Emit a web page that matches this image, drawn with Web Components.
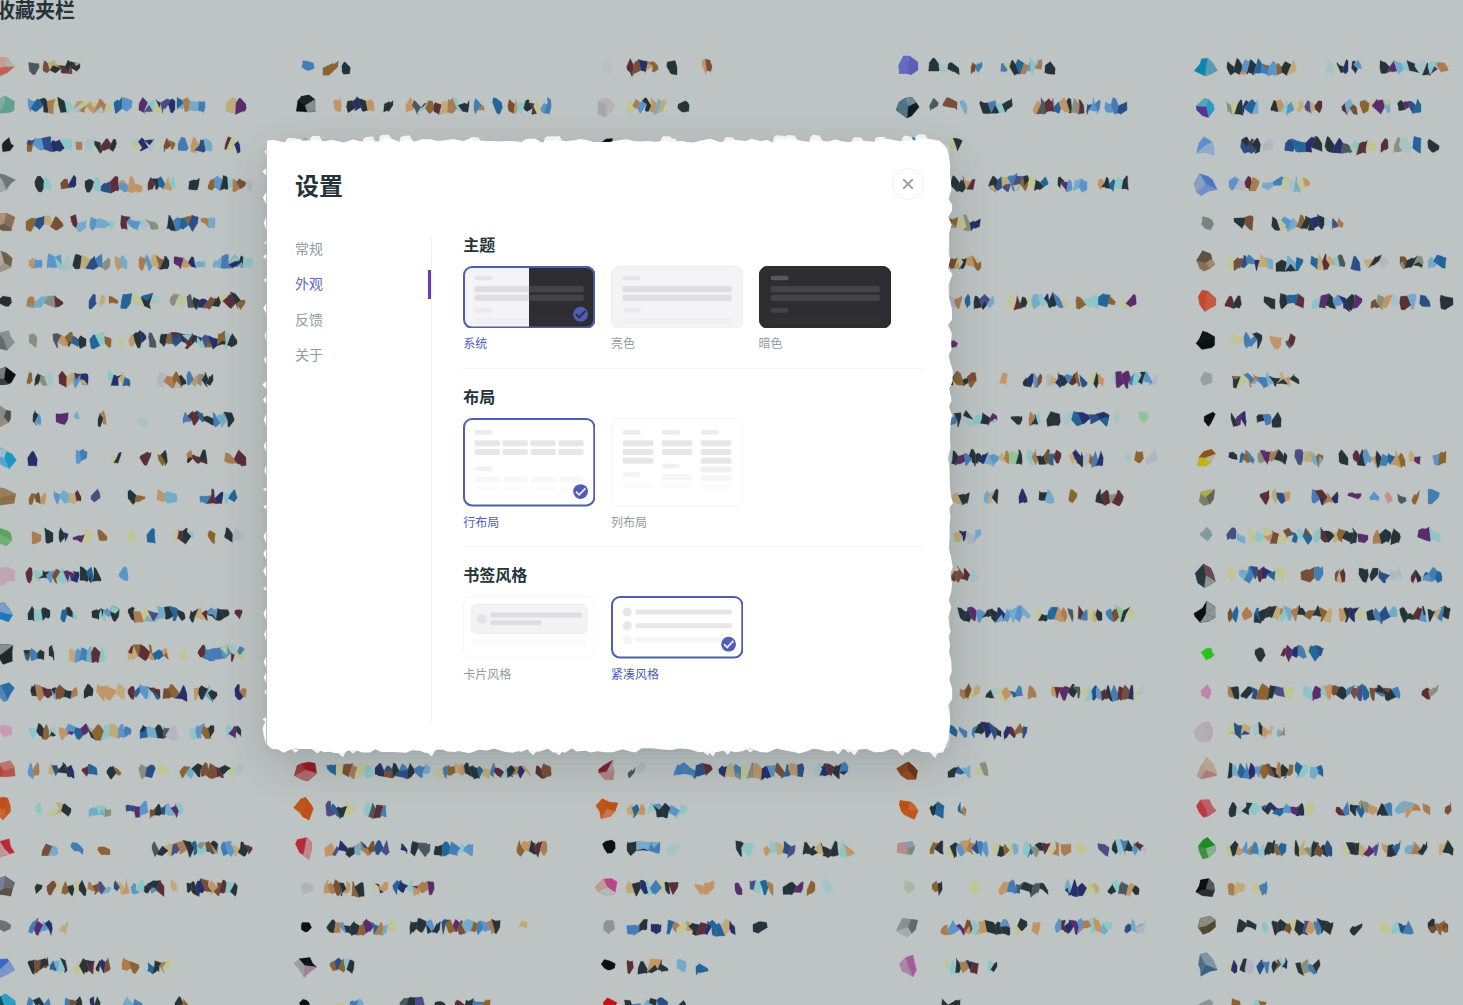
<!DOCTYPE html>
<html lang="zh-CN">
<head>
<meta charset="utf-8">
<title>收藏夹栏</title>
<style>
html,body{margin:0;height:100%;overflow:hidden;background:#bec4c3}
body{font-family:"Noto Sans CJK SC","Noto Sans",sans-serif;color:#26343a}
</style>
</head>
<body>
<bookmark-page heading="收藏夹栏">
<settings-dialog heading="设置">
<settings-nav slot="nav">
<nav-item>常规</nav-item><nav-item active>外观</nav-item><nav-item>反馈</nav-item><nav-item>关于</nav-item>
</settings-nav>
<settings-section heading="主题">
<option-card kind="system" selected>系统</option-card><option-card kind="light">亮色</option-card><option-card kind="dark">暗色</option-card>
</settings-section>
<settings-section heading="布局">
<option-card kind="rows" selected>行布局</option-card><option-card kind="columns">列布局</option-card>
</settings-section>
<settings-section heading="书签风格">
<option-card kind="cards">卡片风格</option-card><option-card kind="compact" selected>紧凑风格</option-card>
</settings-section>
</settings-dialog>
</bookmark-page>
<script>
const seeded = s => () => { s = (s + 0x6D2B79F5) | 0; let t = Math.imul(s ^ s >>> 15, 1 | s); t = t + Math.imul(t ^ t >>> 7, 61 | t) ^ t; return ((t ^ t >>> 14) >>> 0) / 4294967296; };
const root = (el, html) => { el.attachShadow({mode:'open'}).innerHTML = html; };
const f = n => n.toFixed(1);

const INK = {d:'#26343a',n:'#25306b',b:'#23659a',s:'#447db3',l:'#5b94c8',c:'#74abc9',t:'#8cc6c6',p:'#a6c4c5',y:'#bfc594',a:'#c0aa78',o:'#c29567',m:'#aa7c51',w:'#8c6434',r:'#774f36',x:'#5b2e38',u:'#5a2c6c',e:'#4a4d86',g:'#8a8f7d',z:'#2a4f86',v:'#b3b6c2',k:'#0b1113',G:'#4b595e',q:'#8fc496',i:'#c69092'};

// Each row: row number | icon colours | runs of shards as start-end:inks
const COLUMNS = [
{x:4, rows:`0|#c4605a,#c9a08f,#a9b9ab|29-39:G 43-80:raxdd
1|#5fa090,#80ad9f|28-72:lbdmydt 73-111:pyomy 114-132:bl 139-175:utyen 177-205:bmcs 226-246:au
2|#1c2224|27-72:wlznt 76-82:m 85-116:pdxd 131-154:ynp 164-175:rw 178-188:s 191-212:ozc 225-240:xyn
3|#707674,#a5aaaa|35-51:dt 61-76:rn 85-100:dt 101-142:zxloo 148-175:xdbot 189-199:d 208-233:wldt 233-252:mrv
4|#6b594c,#b0917d,#8c7055|26-63:wzar 71-86:xc 90-115:lct 121-158:xlpg 167-198:dsbwz 201-215:mc
5|#6d6250,#a0978a,#b3aa98|29-42:ol 47-71:ltp 73-110:dazsg 115-127:oc 139-169:mlawd 174-205:uonc 213-252:csndt
6|#2a2f2d|27-63:mcgx 89-96:z 100-105:a 109-118:w 121-160:bydp 170-186:gy 187-245:Gdnrdyxdw
7|#8a9090,#666b6b|29-37:g 53-86:Gowbd 90-111:btw 119-124:y 129-146:odn 149-156:G 160-237:dwznxdtenwtd
8|#0b1113,#3b4142,#777d7c|27-32:w 35-53:dgp 59-88:xaln 108-130:tnab 157-186:vmwd 187-213:sogdd
9|#858a87,#4a4d4c,#958f7b|33-41:dl 56-68:u 74-79:c 98-106:dm 138-149:p 183-234:sxbdscd
10|#1c96c4,#5ca6cc,#9fc0c6|28-37:n 76-87:ls 111-121:yd 140-151:x 158-167:wd 187-207:mxd 225-246:mx
11|#8c7045,#98805d|29-46:wro 54-81:lcax 91-100:e 128-145:dw 157-177:oc 200-223:sxn 224-237:tb
12|#5aa55e,#72ae76|32-41:m 45-53:d 59-68:dn 73-92:uy 98-107:w 128-136:y 147-155:b 173-194:yxdt 208-215:w 225-243:dv
13|#bfa4b1,#bda8b1|26-32:x 34-79:tdlrtun 80-101:dbd 119-128:l
14|#1b76bb,#7ba1c6|28-50:dtd 61-77:bdt 92-119:dtld 128-185:dmyecdbd 190-229:daxldd 235-242:x
15|#222829,#8d9190|24-44:Gsd 49-54:d 69-105:alscxt 128-168:awxwbo 180-186:y 198-244:xsslpy
16|#2a6ca5,#5089b4|31-77:dmxcrdm 84-93:d 97-125:ooa 128-160:xbltx 163-187:rwn 194-217:odcd 235-246:nm
17|#c79ab5|29-56:tdwp 59-131:olbudwtals 140-177:bcdGv 190-214:tlwd 226-241:tud
18|#b5544f,#b14543,#bd7770|28-39:lm 49-74:azddn 82-97:xb 107-121:dw 139-155:gz 158-169:y 180-243:wcdrrxdyp
19|#c0561c,#c96734,#bd5218|36-42:t 48-71:yad 89-111:ctg 126-148:zul 150-183:rdzcut
20|#b82a35,#bf9a9b|42-58:rc 71-83:s 98-110:w 152-218:Gdaemdbtrg 221-252:sladx
21|#5b5248,#77809c,#6a6b70|35-42:d 47-60:ry 62-86:wdyd 88-111:mrec 114-129:zao 131-164:ltddx 171-177:a 187-237:ddnrorxtd
22|#6b7074|29-52:suln 60-68:a
23|#3c69c0,#8196cc|28-48:drd 50-67:bctd 74-94:ydx 96-110:dnr 122-139:mw 148-171:bdmy
24|#2c9cc4,#164b58|27-50:tds 65-82:srd 90-100:nd 122-142:cs 175-188:dw`},
{x:305, rows:`0|#447db3|323-338:w 342-350:d
1|#0b1113,#1c2526,#888f8f|334-341:o 347-374:dndo 384-393:d 406-469:oGtwxamtd 474-484:sm 493-502:b 508-551:rotdxyls
2|#92b8ba|
18|#951b20,#b06b6b,#a33c3c|327-373:byrmyt 375-430:nrdzdsc 437-530:yswaoddbasxtdmno 536-551:xr
19|#c0561c,#bd5218|326-354:ebdy 364-386:tGxs
20|#b82a35,#c08a8c|325-389:oendcmrze 401-407:n 411-430:dG 434-473:dbstl 517-547:wodxm
21|#b0b5b4|324-350:omrdo 352-364:wd 372-388:ydo 393-434:bntomu
22|#0b1113|327-396:dmlddwubmcy 410-440:ddld 442-500:zwurcwslmd 519-527:a
23|#999e9e,#0b1113,#a4809d|330-354:wzwtd
24|#0b1113|333-345:y 350-363:sc 400-424:Gde 435-445:d 455-490:xdsw`},
{x:607, rows:`0|#b9c0c5|627-658:xrnow 667-677:d 702-712:or
1|#b4b1b3,#bbb4b5,#a5a8a9|627-666:ymldoca 678-689:d
2|#0b1113|700-714:t
18|#b08383,#7a2028,#b29595|628-635:G 637-645:v 674-712:sszx 719-804:nasygonlrboz 815-848:pnxds
19|#c0561c,#bd5218,#c77750|627-645:abo 648-687:tddlt
20|#0b1113|627-660:dcs 667-680:p 736-753:dt 764-795:otaze 803-838:ddadd 840-854:to
21|#b8458a,#b7bcb5,#c09c92|626-678:adntsydx 695-714:oo 735-742:u 750-773:etbm 783-803:du 807-815:w 822-833:p
22|#8f9493|627-647:sd 651-661:n 667-735:bmyodxnbban 753-767:d
23|#0b1113|627-633:x 638-668:dod 677-686:c 696-708:b
24|#c01515|625-668:dsccz 678-686:d`},
{x:908, rows:`0|#5a5fb8,#666bbd|929-939:d 939-947:p 948-959:d 971-982:rs 1001-1042:sydbmltm 1045-1055:d
1|#101f24,#51788a,#6d8d97|930-938:G 943-957:r 960-967:c 980-1012:dstd 1033-1084:oGxxbodgx 1087-1100:zls 1105-1127:lsz
2|#2080c0|950-962:yd
3||951-975:ddox 989-1048:dzasewydb 1058-1072:dul 1074-1087:cl 1098-1128:odbtd
4||948-980:wygn
5||948-981:rydow
6||948-962:vm 965-970:b 974-994:dec 1009-1068:yxdyctndsy 1076-1115:wttbw 1121-1136:yu
7||949-957:u
8||950-976:dwdr 1000-1007:o 1023-1042:dnlr 1046-1080:vandsxw 1080-1087:z 1090-1104:ydo 1111-1157:puustdlv
9||950-961:sd 963-997:ptdu 1011-1022:d 1029-1040:mdt 1047-1060:d 1063-1109:pbnzn 1114-1119:p 1139-1148:q
10||952-1022:dusddnclamqd 1027-1061:tmdrbx 1069-1103:andvwsn 1125-1131:p 1135-1143:w 1146-1157:v
11||950-969:ad 984-998:cad 1019-1027:n 1039-1054:dc 1069-1077:w 1096-1123:dxgx
12||954-981:anvc
13||950-978:rrxp
14||958-1030:ddulddnlclc 1036-1067:ydbbom 1068-1073:G 1078-1102:xsyad 1106-1134:srqdy
16||960-980:mrya 986-997:dp 998-1022:yobs 1028-1036:m 1051-1080:oxudG 1082-1143:ytzlxdsxrnyp
17||949-957:b 959-967:s 972-1001:sdnzd 1004-1027:nxwz
18|#85451f,#6b3518,#944b20|948-970:dbc 975-988:yg
19|#c0561c,#bd5218,#c96734|930-944:db 958-966:bm
20|#7b8888,#b69082,#9598b1|930-943:wd 947-988:ydlomzsl 993-1018:ydwyc 1023-1059:tbgdxym 1061-1071:m 1077-1086:y 1098-1109:e 1112-1146:dtsdlxv
21|#a8b8a0|932-942:wd 970-979:y 999-1048:osbdGd 1065-1099:cnnya 1108-1139:dtGod
22|#8a9090,#626b6b,#a7acac|941-1010:mlurtoddd 1014-1027:yd 1032-1040:o 1055-1112:lxnulmtoct 1125-1145:zcv
23|#a55c9d,#a58ba3|945-978:ytdmdx 988-997:td
24||942-960:dd`},
{x:1206, rows:`0|#0b86ae,#5a9fae|1227-1254:ddod 1242-1296:ldbslwda 1326-1334:p 1337-1348:dn 1352-1361:dl 1380-1437:ductdpdt 1437-1448:m
1|#2e9ac4,#5c2f92,#5aa3b5|1227-1258:gydnbc 1271-1303:dotlya 1305-1322:eax 1342-1357:xcr 1360-1390:wyuc 1398-1421:duzb
2|#5b90cc,#8faecb|1241-1260:zxd 1263-1273:v 1285-1322:zbnd 1325-1376:dnGtxy 1381-1388:x 1394-1411:gp 1413-1421:b 1428-1439:d
3|#4a76c2,#6f91c9,#8b9fbf|1229-1245:lv 1245-1259:xm 1262-1284:cs 1282-1310:ypcyo
4|#7b8280|1234-1245:d 1245-1253:r 1272-1343:dylcwddndpem
5|#8a7050,#5a5446,#9e8a6f|1228-1273:yrzsnac 1276-1303:dcb 1311-1345:baxatG 1351-1360:z 1364-1388:adv 1400-1423:rdg 1428-1446:cb
6|#c24a30,#c65a42|1225-1241:xd 1264-1275:d 1280-1304:dbx 1312-1362:tudlndu 1371-1398:rgop 1400-1416:xc 1420-1430:z 1440-1453:d
7|#0b1113,#10191b|1231-1243:y 1244-1262:ssd 1270-1281:o 1286-1295:Gx
8|#9a9fa0|1233-1299:dywmscdaod
9|#0b1113|1231-1246:dun 1257-1271:ds 1272-1281:d
10|#c0b21c,#8a5220,#b3b6a6|1229-1237:d 1240-1254:bws 1258-1287:gumdd 1295-1303:e 1304-1323:acw 1339-1348:d 1353-1405:xdlodsbow 1409-1420:au 1433-1446:lw
11|#7d8068,#b4ab4d,#5f655b|1260-1269:x 1272-1290:azo 1312-1338:sxmn 1348-1361:u 1370-1379:l 1385-1392:i 1398-1406:G 1412-1419:w 1428-1439:s
12|#7f9aa2|1227-1236:e 1237-1245:c 1248-1263:yt 1264-1312:oryrbtb 1314-1357:txdawdd 1358-1368:u 1373-1391:md 1391-1400:d 1418-1440:ut
13|#2a3840,#6b4c4c,#8d9699|1227-1235:y 1239-1275:cszxnb 1276-1285:y 1301-1323:rs 1335-1345:rax 1359-1368:d 1370-1378:d 1379-1402:zvp 1411-1421:xd 1423-1442:lsb
14|#0b1113,#8f9595|1228-1238:rb 1242-1252:m 1254-1280:bdda 1280-1332:tcmdwdwa 1339-1363:odny 1367-1397:dszc 1400-1426:ddxl 1428-1450:dasd
15|#2cc020|1255-1265:d 1281-1323:xunsybz
16|#c083ac|1228-1239:md 1241-1294:dzwdey 1303-1321:tu 1321-1369:tordsreb 1370-1400:rdds 1422-1438:xg
17|#b3aab0,#b4b0b2|1228-1250:yza 1253-1273:pdoa 1277-1285:cm
18|#b09a92,#b5a58d,#a97d75|1228-1293:dcbsnlwrdmdw 1295-1308:bt 1310-1323:cb
19|#bd3a45,#ba636a|1229-1236:d 1237-1260:pdt 1262-1304:dnblud 1306-1314:y 1336-1349:xs 1350-1377:dbgo 1377-1392:ds 1395-1420:com 1423-1430:m 1445-1451:r
20|#3e9140,#1f8a26,#8ab08d|1226-1286:ydolmstddwb 1295-1332:dagdrdz 1343-1378:yddaue 1382-1400:odb 1405-1427:cmd 1439-1453:ad
21|#2b2f33,#0b0f11,#54595e|1228-1245:ma 1252-1267:ys
22|#4f4a30,#8b8e86|1237-1256:dd 1262-1268:t 1272-1333:ddrydeosdd 1350-1362:d 1380-1391:y 1392-1413:tzs 1428-1448:dwr
23|#4a6f8a,#7f97a5,#3b6079|1228-1237:yn 1240-1254:dv 1257-1269:zs 1272-1287:drtn 1296-1320:dgsd
24|#8f9493|1232-1240:w 1254-1266:tw`}];

class BookmarkMosaic extends HTMLElement {
  connectedCallback() {
    const r = seeded(77); let out = '';
    const poly = (pts, c) => { out += `<path fill="${c}" stroke="${c}" stroke-width=".3" d="M${pts.map(p => f(p[0]) + ' ' + f(p[1])).join('L')}Z"/>`; };
    for (const col of COLUMNS) for (const line of col.rows.split('\n')) {
      const [n, icon, runs] = line.split('|'); const y = 67 + n * 39.1;
      if (icon) {
        const cs = icon.split(','), k = 8, small = cs.length === 1;
        const R = small ? 6.8 : 10.5, c0 = [col.x + (small ? r()*3 : 0), y - 1.5 + r()*2];
        const ring = Array.from({length:k}, (_, i) => { const q = i / k * 6.283 + r()*.6, d = R * (.62 + r()*.58); return [c0[0] + Math.cos(q)*d, c0[1] + Math.sin(q)*d]; });
        poly(ring, cs[0]);
        const off = Math.floor(r()*k);
        if (!small) for (let i = 0; i < k; i++) { const c = cs[Math.floor(i * cs.length / k)], j = (i + off) % k; if (c !== cs[0]) poly([c0, ring[j], ring[(j+1)%k]], c); }
      }
      for (const run of (runs || '').split(' ')) {
        if (!run) continue;
        const [span, inks] = run.split(':'), [a, b] = span.split('-').map(Number), w = (b - a) / inks.length;
        let drift = (r() - .5) * 3;
        const edges = Array.from({length: inks.length + 1}, (_, i) => {
          const end = i === 0 || i === inks.length, m = drift + (r() - .5) * 8, h = end ? .8 + r()*3.5 : 1.4 + r()*4.6;
          return {x: a + i*w + (end ? 0 : (r() - .5)*w*.5), t: y + m - h, b: y + m + h, k: (r() - .5) * (end ? 1 : 5)};
        });
        let up = r() < .5;
        [...inks].forEach((c, i) => {
          const L = edges[i], Q = edges[i+1], mx = (L.x + Q.x)/2, mode = r();
          up = !up;
          let top = y - 4.5 - r()*4.5, bot = y + 4.5 + r()*4;
          if (mode < .5) up ? bot -= 4.5 : top += 4.5;
          top = Math.min((L.t + Q.t)/2, top); bot = Math.max((L.b + Q.b)/2, bot);
          const j1 = (r()-.5)*w*.7, j2 = (r()-.5)*w*.7, fat = w > 5 ? w*.2*r() : 0;
          const A = [L.x + L.k, L.t], B = [Q.x + Q.k, Q.t], C = [Q.x - Q.k, Q.b], D = [L.x - L.k, L.b];
          const shape = [A, [mx + j1 - fat, top], [mx + j1 + fat, top + r()*1.5], B, C, [mx + j2 + fat, bot], [mx + j2 - fat, bot - r()*1.5], D];
          poly(shape, INK[c]);
          if (w > 6.3 && r() < .28) {
            const c2 = INK[inks[(i + 2) % inks.length]], mid = [mx + (r()-.5)*3, y + (r()-.5)*3];
            poly(up ? [D, mid, C, shape[5], shape[6]] : [A, shape[1], shape[2], B, mid], c2);
          }
        });
      }
    }
    root(this, `<style>:host{display:block;width:1463px;height:1005px}svg{display:block}</style><svg width="1463" height="1005" viewBox="0 0 1463 1005">${out}</svg>`);
  }
}

class BookmarkPage extends HTMLElement {
  connectedCallback() {
    root(this, `<style>:host{display:block;position:relative;width:1463px;height:1005px;overflow:hidden}
    h1{position:absolute;left:-5px;top:-5px;margin:0;font-size:20px;line-height:29px;font-weight:700;color:#26343a;white-space:nowrap}</style>
    <bookmark-mosaic></bookmark-mosaic><h1>${this.getAttribute('heading')}</h1><slot></slot>`);
  }
}

class TornPaper extends HTMLElement {
  connectedCallback() {
    const r = seeded(21), W = 683, H = 606, p = []; let tips = '';
    const facet = pts => { tips += `<path d="M${pts.map(q => f(q[0]) + ' ' + f(q[1])).join('L')}Z"/>`; };
    for (let x = 1; x < W - 14; x += 4 + r()*7) {
      const y = -4.8 + r()*4.6; p.push([x, y]);
      if (r() < .2) facet([[x-7, 2], [x-5, y-2], [x-3, y-3-r()*2], [x+4, y-3-r()*1.5], [x+7, y+1], [x+5, 3]]);
    }
    p.push([W - 10, -2], [W - 3, 5]);
    for (let y = 11; y < H - 8; y += 5 + r()*7) p.push([W - 2.5 + r()*5.5, y]);
    for (let x = W - 7; x > 8; x -= 4 + r()*7) {
      const y = H - 1 + r()*5.5; p.push([x, y]);
      if (r() < .24) facet([[x-6, H-2], [x-3, y+1], [x+1, y+4+r()], [x+5, H+1]]);
    }
    p.push([5, H], [0, H - 5], [0, -1]);
    let left = '';
    for (let y = 6; y < H - 25; y += 13 + r()*15) { const h = 4 + r()*9; left += `M-.8 ${f(y)}L${f(-2-r()*2.8)} ${f(y+h*.45)}L-.8 ${f(y+h)}Z`; }
    left += 'M-.8 577L-4.5 585L-3 594L-.8 602Z';
    root(this, `<style>:host{position:absolute;inset:0;z-index:-1;border-radius:6px;box-shadow:0 14px 50px rgba(38,52,58,.2),0 3px 10px rgba(38,52,58,.05)}svg{display:block;overflow:visible}</style>
    <svg width="${W}" height="${H}"><g fill="#f3f3f3">${tips}</g><path fill="#fff" d="M${p.map(q => f(q[0]) + ' ' + f(q[1])).join('L')}Z"/><path fill="#fafafa" d="${left}"/></svg>`);
  }
}

class SettingsDialog extends HTMLElement {
  connectedCallback() {
    root(this, `<style>:host{display:flex;flex-direction:column;position:absolute;z-index:1;left:267px;top:143px;width:683px;height:606px;isolation:isolate;box-sizing:border-box;padding:25px 26.5px 26px 28px}
    header{display:flex;justify-content:space-between;align-items:flex-start;height:67px;flex:none}
    h2{margin:0;font-size:24px;line-height:34px;font-weight:700}
    button{width:31.5px;height:31.5px;box-sizing:border-box;padding:0;border:1px solid #f0f1f2;border-radius:50%;background:#fff;display:grid;place-items:center}
    .body{display:flex;flex:1;min-height:0}main{flex:1;padding-left:31.2px}</style>
    <torn-paper></torn-paper>
    <header><h2>${this.getAttribute('heading')}</h2><button aria-label="关闭"><svg width="12" height="12" viewBox="0 0 12 12"><path d="M1.2 1.2l9.6 9.6M10.8 1.2l-9.6 9.6" stroke="#8f9ca2" stroke-width="1.7" fill="none"/></svg></button></header>
    <div class="body"><slot name="nav"></slot><main><slot></slot></main></div>`);
  }
}

class SettingsNav extends HTMLElement {
  connectedCallback() {
    root(this, `<style>:host{display:flex;flex-direction:column;gap:6.3px;width:136px;border-right:1px solid #f0f1f3;box-sizing:content-box}</style><slot></slot>`);
  }
}

class NavItem extends HTMLElement {
  connectedCallback() {
    root(this, `<style>:host{display:block;font-size:14px;line-height:27px;height:29px;color:#8f9ca2;border-right:3px solid transparent}
    :host([active]){color:#5e69c0;border-color:#6a3ab7}</style><slot></slot>`);
  }
}

class SettingsSection extends HTMLElement {
  connectedCallback() {
    root(this, `<style>:host{display:flow-root;border-bottom:1px solid #f5f6f7;padding-bottom:16.8px;margin-bottom:18.2px}
    :host(:last-of-type){border:0}
    h3{margin:-1.5px 0 12.3px;font-size:16px;line-height:20px;font-weight:700}div{display:flex;gap:15.4px}</style>
    <h3>${this.getAttribute('heading')}</h3><div><slot></slot></div>`);
  }
}

const bar = (x, y, w, h, c, rx = 1.4) => `<rect x="${x}" y="${y}" width="${w}" height="${h}" rx="${rx}" fill="${c}"/>`;
const pill = (x, y, c) => bar(x, y, 18, 4.6, c, 2.3);
const themed = (a, b, c, d) => pill(11.7, 9.7, a) + bar(11.7, 20, 109, 6.2, b) + bar(11.7, 28.7, 109, 6.2, b) + pill(11.7, 42.1, c) + bar(11.7, 52, 109, 6, d);
const lightArt = themed('#e5e5e7', '#dedee0', '#ebebed', '#f0f0f2');
const darkArt = themed('#58585c', '#434348', '#434348', '#303035');
const THUMBS = {
  light: () => `<rect width="133" height="63" fill="#f4f4f6"/>` + lightArt,
  dark: () => `<rect width="133" height="63" fill="#2e2d32"/>` + darkArt,
  system: () => `<rect width="133" height="63" fill="#f4f4f6"/>${lightArt}<svg x="66" width="67" height="63" viewBox="66 0 67 63"><rect x="66" width="67" height="63" fill="#2e2d32"/>${darkArt}</svg>`,
  rows: () => pill(11.7, 12, '#ebebeb') + pill(11.7, 48.4, '#f2f2f2') + [11.7, 39.7, 67.6, 95.6].map(x => bar(x, 22.3, 25, 6, '#e7e7e7') + bar(x, 31, 25, 6, '#e7e7e7') + bar(x, 59, 25, 5.6, '#f7f7f7') + bar(x, 68, 25, 5, '#fcfcfc')).join(''),
  columns: () => [[22.3,31,39.8,-54.3,65],[22.3,31,-45.7,56,65],[22.3,31,39.8,48.5,57,65.7]].map((ys, i) => { const x = 11.7 + i*39.05; return pill(x, 12, '#ebebeb') + ys.map(y => y < 0 ? pill(x, -y, y < -50 ? '#f5f5f5' : '#f0f0f0') : bar(x, y, 30.6, y > 60 ? 5 : 6, y > 60 ? '#fafafa' : y > 50 ? '#f6f6f6' : y > 45 ? '#efefef' : '#e7e7e7')).join(''); }).join(''),
  cards: () => `<rect x="8.1" y="8.5" width="116" height="29" rx="5" fill="#f3f3f5" stroke="#eeeef0"/><circle cx="18.8" cy="23" r="5" fill="#e3e3e5"/>` + bar(27.3, 16.5, 91.5, 5, '#dedee0') + bar(27.3, 24.3, 51, 5, '#dedee0') + bar(7.7, 43.3, 117, 12, 'url(#fade)', 5),
  compact: () => [[16,'#e6e6e6'],[29.8,'#e7e7e7'],[43.6,'#f5f5f5']].map(([y, c]) => `<circle cx="16.2" cy="${y}" r="4.5" fill="${c}"/>` + bar(24.4, y - 2.5, 96.5, 5, c)).join('')
};

class OptionCard extends HTMLElement {
  connectedCallback() {
    const kind = this.getAttribute('kind'), sel = this.hasAttribute('selected');
    const h = kind === 'rows' || kind === 'columns' ? 88.4 : 62.6;
    const stroke = sel ? '#4f5db8' : kind === 'dark' ? '#2e2d32' : kind === 'light' ? '#ebebed' : '#f5f5f6', sw = sel ? 2 : 1;
    const cy = h > 80 ? 73.6 : 48.2;
    const tick = sel ? `<circle cx="117.6" cy="${cy}" r="7.4" fill="#4f5db8"/><path d="M113 ${cy}l3.2 3.2l6.2-6.4" fill="none" stroke="${kind === 'system' ? '#2e2d32' : '#e9ebf8'}" stroke-width="1.8"/>` : '';
    root(this, `<style>:host{display:block;width:132.3px;flex:none}svg{display:block}
    .label{font-size:12px;line-height:16px;margin-top:7px;color:${sel ? '#4f5db8' : '#8f9ca2'}}</style>
    <svg width="132.3" height="${h}" viewBox="0 0 132.3 ${h}"><defs><clipPath id="c"><rect width="132.3" height="${h}" rx="9"/></clipPath><linearGradient id="fade" x2="0" y2="1"><stop stop-color="#fafafa"/><stop offset="1" stop-color="#fff"/></linearGradient></defs>
    <g clip-path="url(#c)">${THUMBS[kind]()}</g><rect x="${sw/2}" y="${sw/2}" width="${132.3-sw}" height="${h-sw}" rx="8" fill="none" stroke="${stroke}" stroke-width="${sw}"/>${tick}</svg>
    <div class="label"><slot></slot></div>`);
  }
}

for (const [tag, cls] of Object.entries({'bookmark-mosaic':BookmarkMosaic,'bookmark-page':BookmarkPage,'torn-paper':TornPaper,'settings-dialog':SettingsDialog,'settings-nav':SettingsNav,'nav-item':NavItem,'settings-section':SettingsSection,'option-card':OptionCard})) customElements.define(tag, cls);
</script>
</body>
</html>
